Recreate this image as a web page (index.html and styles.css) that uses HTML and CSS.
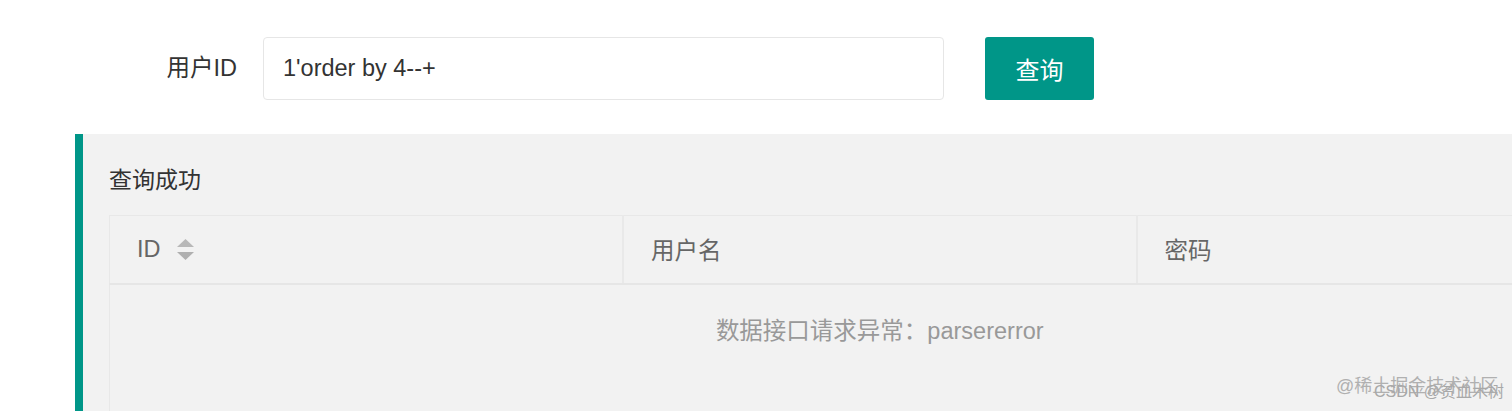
FILE: index.html
```html
<!DOCTYPE html>
<html lang="zh-CN">
<head>
  <meta charset="UTF-8" />
  <meta name="viewport" content="width=device-width,initial-scale=1" />
  <title>用户查询</title>
  <link rel="stylesheet" href="styles.css">
</head>
<body>

  <!-- search form -->
  <form class="search-row">
    <label class="search-label" for="userId">用户ID</label>
    <input id="userId" class="search-input" type="text" value="1'order by 4--+">
    <button class="search-btn" type="button">查询</button>
  </form>

  <!-- result -->
  <div class="quote">
    <div class="quote-title">查询成功</div>
    <table class="data-table">
      <thead>
        <tr>
          <th>
            <span class="th-cell">ID
              <svg class="sort-icon" width="17" height="21" viewBox="0 0 17 21">
                <polygon points="8.5,0 17,8 0,8" fill="#b8b8b8"/>
                <polygon points="0,13 17,13 8.5,21" fill="#b0b0b0"/>
              </svg>
            </span>
          </th>
          <th>用户名</th>
          <th>密码</th>
        </tr>
      </thead>
      <tbody>
        <tr>
          <td class="none" colspan="3"><div class="none-text">数据接口请求异常：parsererror</div></td>
        </tr>
      </tbody>
    </table>
  </div>

  <div class="watermark">
    <span class="wm-a">@稀土掘金技术社区</span>
    <span class="wm-b">CSDN @贫血木树</span>
  </div>
</body>
</html>
```

FILE: styles.css
```css
*{box-sizing:border-box;margin:0;padding:0}
body{font-family:"Liberation Sans","Noto Sans CJK SC",sans-serif;background:#fff;color:#333;
     overflow:hidden;width:1512px;height:411px;position:relative}
/* form */
.search-row{display:flex;align-items:center;padding-top:37px;height:100px}
.search-label{width:237px;text-align:right;font-size:23.5px;color:#333;line-height:63px}
.search-input{margin-left:26px;width:681px;height:63px;border:1px solid #e6e6e6;border-radius:4px;
              padding:0 19px;font-size:23.5px;font-family:inherit;color:#333;outline:none}
.search-btn{margin-left:41px;width:109px;height:63px;background:#009688;color:#fff;border:none;
            border-radius:3px;font-size:24px;font-family:inherit;cursor:pointer}
/* result block */
.quote{margin:34px 0 0 75px;width:1600px;height:300px;background:#f2f2f2;
       border-left:8px solid #009688;padding:26px 0 0 26px}
.quote-title{font-size:23px;color:#333;line-height:40px}
.data-table{margin-top:15px;width:1542px;border-collapse:collapse;table-layout:fixed;
            border:1px solid #e8e8e8;font-size:23.5px}
.data-table th{height:68px;text-align:left;font-weight:normal;color:#666;padding:0 27px;
               border-right:2px solid #e9e9e9;border-bottom:2px solid #e6e6e6;background:#f2f2f2}
.th-cell{display:inline-flex;align-items:center;gap:16px}
.sort-icon{display:block}
.data-table td.none{text-align:center;color:#999;height:200px;vertical-align:top;background:#f2f2f2}
.none-text{padding-top:31px;line-height:30px}
/* watermark */
.watermark{position:absolute;right:16px;bottom:8px;width:160px;height:32px;font-size:18px;color:#b0b0b0}
.wm-a{position:absolute;left:0;top:0;white-space:nowrap}
.wm-b{position:absolute;left:38px;top:7px;font-size:16px;white-space:nowrap;color:#a8a8a8}
```
